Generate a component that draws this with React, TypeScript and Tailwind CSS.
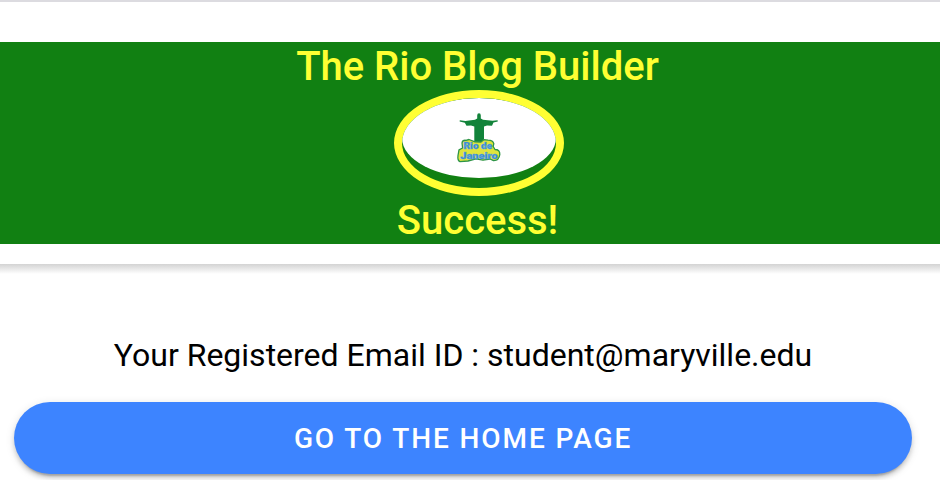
import React from "react";

function RioLogo() {
  return (
    <svg viewBox="0 0 60 64" className="block h-[64px] w-[60px]" aria-hidden="true">
      <path
        d="M27.2 10.6Q27.2 8.3 29 8.3Q30.8 8.3 30.8 10.6V13.4L33 14.8L42.5 15.8L47.6 15.2L47.8 16.4L43.5 17.6L42 20.8L37 20.4L34 21.4V40H24.3V21.4L21 20.4L16.5 20.8L14.8 17.8L9.6 16.6L9.8 15.2L15.4 16L25 14.8L27.2 13.4Z"
        fill="#12833a"
      />
      <path
        d="M12 38Q12.5 34.8 16 35.3L19 34.5L25 36.8L31 37L34 34.6L38 35.2Q43 35.2 43.8 38.6L43.2 41.5L45 44.5Q50 44.5 49.8 49.5Q49 55.8 43.5 55.6L40 54L33 55.2L26 53.8L18 56L10 56.6Q7.3 55.5 8 50.5L9 44.8L12.6 43Z"
        fill="#dfe53c"
        stroke="#2d9448"
        strokeWidth="1.3"
        strokeLinejoin="round"
      />
      <g
        fill="#2f83dc"
        stroke="#5fa6d8"
        strokeWidth="0.45"
        className="font-['Roboto',sans-serif] font-black"
      >
        <text x="13.6" y="44.4" fontSize="9.2" textLength="28.5" lengthAdjust="spacingAndGlyphs">Rio de</text>
        <text x="10.2" y="53.8" fontSize="9.2" textLength="37.5" lengthAdjust="spacingAndGlyphs">Janeiro</text>
      </g>
    </svg>
  );
}

export default function App() {
  return (
    <div className="h-[480px] w-full overflow-hidden bg-white font-['Roboto',sans-serif]">
      <header className="border-t-2 border-[#dcdbe0] bg-white pt-10">
        <div className="flex h-[202px] flex-col items-center bg-[#118012] pl-[17px] text-[40px] leading-[48px] font-medium text-[#ffff33]">
          <h1 className="h-12 pt-px pr-0.5">The Rio Blog Builder</h1>
          <div className="h-[106px] w-[170px] shrink-0 overflow-hidden rounded-[50%] border-8 border-[#ffff33]">
            <div className="flex h-20 w-full justify-center rounded-[50%] bg-white pt-[7px] pl-0.5">
              <RioLogo />
            </div>
          </div>
          <h2 className="h-12 pt-px pr-0.5">Success!</h2>
        </div>
        <div className="mt-5 h-2.5 bg-linear-to-b from-[#d3d3d3] to-white" />
      </header>
      <main className="pt-[62px] pr-7 pl-3.5">
        <p className="text-center text-[32px] leading-[38px] text-black">
          Your Registered Email ID : student@maryville.edu
        </p>
        <button className="mt-7 flex h-[72px] w-full items-center justify-center rounded-full bg-[#3d84ff] pt-0.5 text-[28px] font-medium tracking-[1.9px] text-white shadow-[0_6px_2px_-4px_rgba(0,0,0,0.2),0_4px_4px_rgba(0,0,0,0.14),0_2px_10px_rgba(0,0,0,0.12)]">
          GO TO THE HOME PAGE
        </button>
      </main>
    </div>
  );
}
